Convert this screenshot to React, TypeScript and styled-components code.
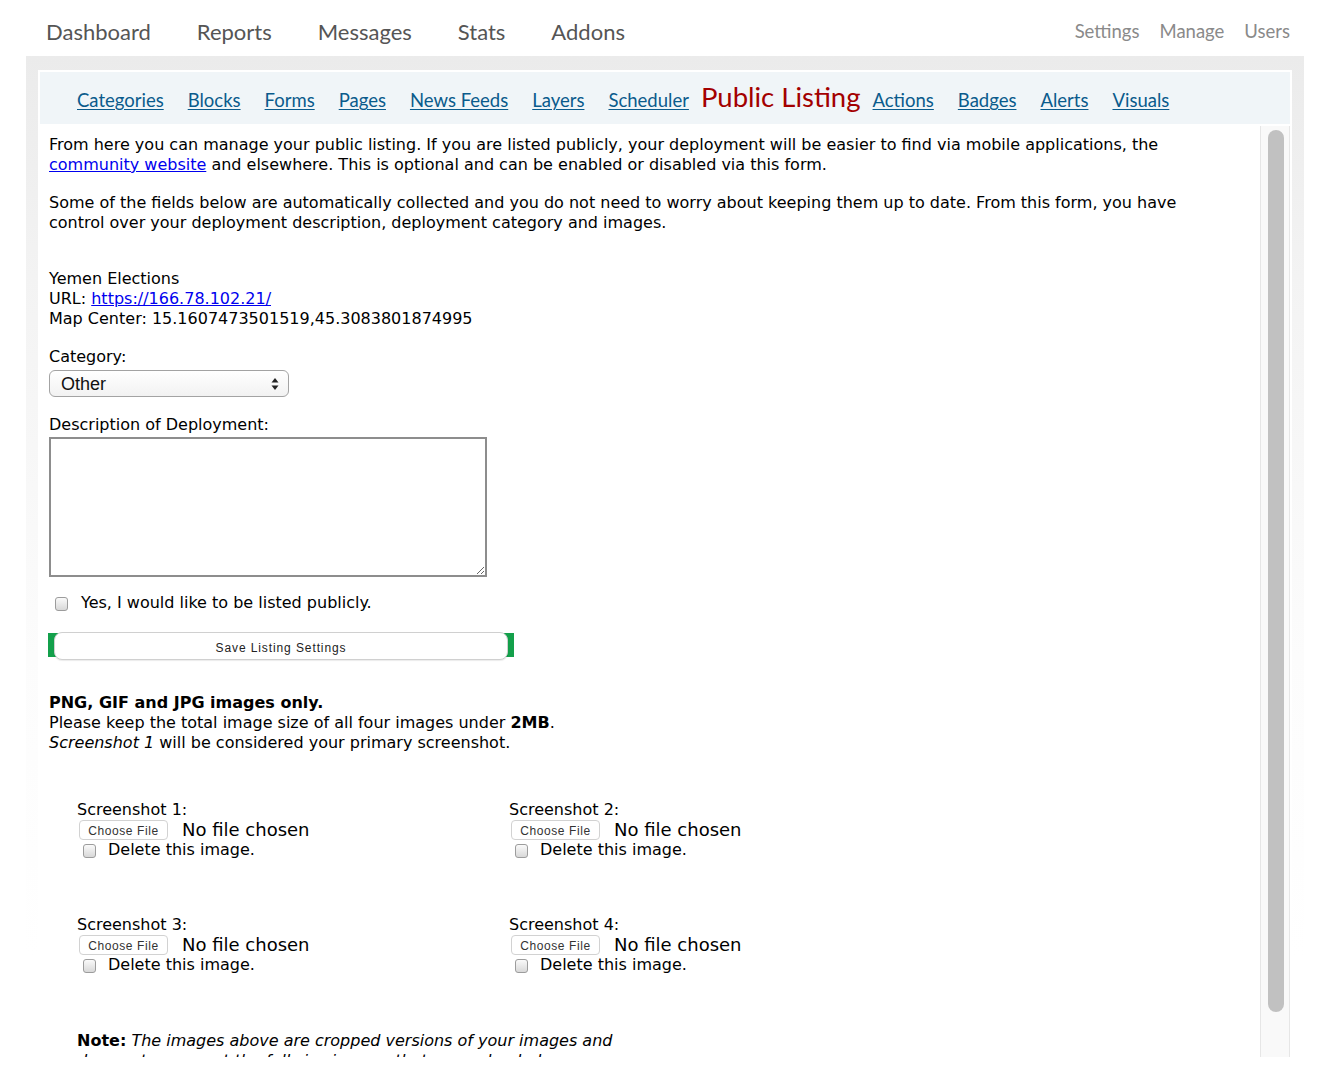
import React from "react";
import styled, { createGlobalStyle } from "styled-components";

const Global = createGlobalStyle`
  html, body { margin: 0; padding: 0; background: #fff; }
  body { font-family: "DejaVu Sans", Verdana, sans-serif; }
`;

const Page = styled.div`
  width: 1324px;
  min-height: 1092px;
  display: flex;
  flex-direction: column;
`;

const Header = styled.header`
  height: 56px;
  box-sizing: border-box;
  padding: 19px 34px 0 46px;
  display: flex;
  justify-content: space-between;
  align-items: flex-start;
  font-family: Lato, "Open Sans", sans-serif;
`;

const MainNav = styled.nav`
  display: flex;
  gap: 46px;
`;

const MainLink = styled.a`
  font-size: 22px;
  line-height: 1.2;
  color: #555;
  text-decoration: none;
`;

const UtilNav = styled.nav`
  display: flex;
  gap: 20px;
  margin-top: 1px;
`;

const UtilLink = styled.a`
  font-size: 18.5px;
  line-height: 1.2;
  color: #8a8a8a;
  text-decoration: none;
`;

const Panel = styled.div`
  margin-left: 26px;
  width: 1278px;
  flex: 1;
  box-sizing: border-box;
  padding: 14px 12px 0;
  background: linear-gradient(to bottom, #ebebeb 0px, #f3f3f3 220px, #fcfcfc 600px, #ffffff 900px);
`;

const Box = styled.div`
  background: #fff;
  padding: 2px 2px 0;
`;

const SubNav = styled.nav`
  height: 52px;
  box-sizing: border-box;
  background: #f0f5f8;
  padding: 8px 0 0 25px;
  display: flex;
  align-items: baseline;
  font-family: Lato, "Open Sans", sans-serif;
`;

const SubLink = styled.a`
  font-size: 18.5px;
  line-height: 1.2;
  padding: 0 12px;
  color: #0a5b8c;
  text-decoration: underline;
  text-decoration-thickness: 1px;
  text-underline-offset: 2px;
`;

const Current = styled.span`
  font-size: 27.5px;
  line-height: 1.2;
  color: #a30000;
`;

const Frame = styled.div`
  margin-top: 2px;
  height: 931px;
  display: flex;
  overflow: hidden;
  background: #fff;
`;

const ScrollTrack = styled.div`
  flex: 0 0 30px;
  box-sizing: border-box;
  background: #f9f9f9;
  border-left: 1px solid #e6e6e6;
  border-right: 1px solid #e6e6e6;
  padding: 4px 5px 0 7px;
`;

const ScrollThumb = styled.div`
  height: 882px;
  border-radius: 8px;
  background: #c1c1c1;
`;

const Content = styled.div`
  flex: 1;
  min-width: 0;
  overflow: hidden;
  display: flex;
  flex-direction: column;
  align-items: flex-start;
  padding: 9px 51px 29px 9px;
  font-size: 16px;
  line-height: 20px;
  color: #000;
`;

const Para = styled.p<{ $gap?: number }>`
  margin: ${(p) => p.$gap ?? 0}px 0 0;
`;

const Block = styled.div<{ $gap: number }>`
  margin-top: ${(p) => p.$gap}px;
  flex-shrink: 0;
`;

const BodyLink = styled.a`
  color: #0000ee;
  text-decoration: underline;
`;

const FakeSelect = styled.div`
  margin-top: 3px;
  width: 240px;
  height: 27px;
  flex-shrink: 0;
  box-sizing: border-box;
  border: 1px solid #a3a3a3;
  border-radius: 6px;
  background: linear-gradient(to bottom, #ffffff, #f2f2f2);
  display: flex;
  align-items: center;
  justify-content: space-between;
  padding: 0 9px 0 11px;
  font-family: "Liberation Sans", Arial, sans-serif;
  font-size: 18px;
  color: #111;
`;

const TextArea = styled.textarea`
  display: block;
  flex-shrink: 0;
  margin: 2px 0 0;
  width: 438px;
  height: 140px;
  box-sizing: border-box;
  border: 2px solid #8d8d8d;
  padding: 2px;
  outline: none;
  font-family: "DejaVu Sans", sans-serif;
  font-size: 14px;
`;

const CheckRow = styled.label<{ $gap: number }>`
  display: flex;
  align-items: center;
  flex-shrink: 0;
  margin-top: ${(p) => p.$gap}px;
`;

const Check = styled.input<{ $right: number }>`
  appearance: none;
  -webkit-appearance: none;
  width: 13px;
  height: 14px;
  margin: 1px ${(p) => p.$right}px 0 6px;
  box-sizing: border-box;
  border: 1px solid #9c9c9c;
  border-radius: 3px;
  background: linear-gradient(to bottom, #fafafa, #d8d8d8);
  flex-shrink: 0;
`;

const SaveBar = styled.div`
  margin: 19px 0 0 -1px;
  width: 466px;
  height: 28px;
  flex-shrink: 0;
  box-sizing: border-box;
  padding: 0 6px;
  background: linear-gradient(
    to bottom,
    transparent 1px,
    #13a04b 1px,
    #13a04b 25px,
    transparent 25px
  );
`;

const SaveButton = styled.button`
  display: block;
  width: 100%;
  height: 28px;
  border: 1px solid #d0d0d0;
  border-radius: 8px;
  background: #fff;
  box-shadow: 0 1px 1px rgba(0, 0, 0, 0.08);
  font-family: "Liberation Sans", Arial, sans-serif;
  font-size: 12px;
  letter-spacing: 0.9px;
  color: #222;
  padding: 3px 0 0;
`;

const Shots = styled.div`
  margin: 47px 0 0 28px;
  flex-shrink: 0;
  display: grid;
  grid-template-columns: 432px 432px;
  row-gap: 55px;
`;

const Shot = styled.div`
  display: flex;
  flex-direction: column;
`;

const FileRow = styled.div`
  display: flex;
  align-items: center;
  height: 20px;
`;

const FileButton = styled.button`
  margin-left: 2px;
  width: 89px;
  height: 20px;
  box-sizing: border-box;
  border: 1px solid #d2d2d2;
  border-radius: 4px;
  background: #fff;
  font-family: "Liberation Sans", Arial, sans-serif;
  font-size: 12px;
  letter-spacing: 0.6px;
  color: #333;
  padding: 2px 0 0;
`;

const FileText = styled.span`
  margin-left: 14px;
  font-size: 18px;
`;

const DeleteRow = styled.label`
  display: flex;
  align-items: center;
  height: 20px;
`;

const Note = styled.div`
  margin: 56px 0 0 28px;
  width: 560px;
  flex-shrink: 0;
`;

const nav = ["Dashboard", "Reports", "Messages", "Stats", "Addons"];
const util = ["Settings", "Manage", "Users"];
const before = ["Categories", "Blocks", "Forms", "Pages", "News Feeds", "Layers", "Scheduler"];
const after = ["Actions", "Badges", "Alerts", "Visuals"];

const Arrows = () => (
  <svg width="8" height="14" viewBox="0 0 8 14" aria-hidden="true">
    <path d="M4 1 L7.5 5.5 L0.5 5.5 Z" fill="#222" />
    <path d="M4 13 L7.5 8.5 L0.5 8.5 Z" fill="#222" />
  </svg>
);

export default function App() {
  return (
    <Page>
      <Global />
      <Header>
        <MainNav>
          {nav.map((n) => (
            <MainLink key={n} href="#">
              {n}
            </MainLink>
          ))}
        </MainNav>
        <UtilNav>
          {util.map((n) => (
            <UtilLink key={n} href="#">
              {n}
            </UtilLink>
          ))}
        </UtilNav>
      </Header>
      <Panel>
        <Box>
          <SubNav>
            {before.map((n) => (
              <SubLink key={n} href="#">
                {n}
              </SubLink>
            ))}
            <Current>Public Listing</Current>
            {after.map((n) => (
              <SubLink key={n} href="#">
                {n}
              </SubLink>
            ))}
          </SubNav>
          <Frame>
            <Content>
              <Para>
                From here you can manage your public listing. If you are listed publicly, your
                deployment will be easier to find via mobile applications, the{" "}
                <BodyLink href="#">community website</BodyLink> and elsewhere. This is optional and
                can be enabled or disabled via this form.
              </Para>
              <Para $gap={18}>
                Some of the fields below are automatically collected and you do not need to worry
                about keeping them up to date. From this form, you have control over your deployment
                description, deployment category and images.
              </Para>
              <Block $gap={36}>
                Yemen Elections
                <br />
                URL: <BodyLink href="#">https://166.78.102.21/</BodyLink>
                <br />
                Map Center: 15.1607473501519,45.3083801874995
              </Block>
              <Block $gap={18}>Category:</Block>
              <FakeSelect>
                <span>Other</span>
                <Arrows />
              </FakeSelect>
              <Block $gap={18}>Description of Deployment:</Block>
              <TextArea />
              <CheckRow $gap={16}>
                <Check type="checkbox" $right={13} />
                Yes, I would like to be listed publicly.
              </CheckRow>
              <SaveBar>
                <SaveButton type="button">Save Listing Settings</SaveButton>
              </SaveBar>
              <Block $gap={33}>
                <b>PNG, GIF and JPG images only.</b>
                <br />
                Please keep the total image size of all four images under <b>2MB</b>.
                <br />
                <i>Screenshot 1</i> will be considered your primary screenshot.
              </Block>
              <Shots>
                {[1, 2, 3, 4].map((i) => (
                  <Shot key={i}>
                    <span>Screenshot {i}:</span>
                    <FileRow>
                      <FileButton type="button">Choose File</FileButton>
                      <FileText>No file chosen</FileText>
                    </FileRow>
                    <DeleteRow>
                      <Check type="checkbox" $right={12} />
                      Delete this image.
                    </DeleteRow>
                  </Shot>
                ))}
              </Shots>
              <Note>
                <b>Note:</b>{" "}
                <i>
                  The images above are cropped versions of your images and does not represent the
                  full size images that you uploaded.
                </i>
              </Note>
            </Content>
            <ScrollTrack>
              <ScrollThumb />
            </ScrollTrack>
          </Frame>
        </Box>
      </Panel>
    </Page>
  );
}
